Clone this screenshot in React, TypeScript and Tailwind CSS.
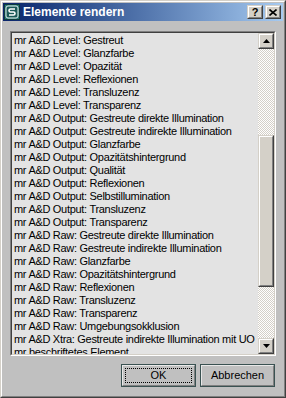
import React from "react";

const items = [
  "mr A&D Level: Gestreut",
  "mr A&D Level: Glanzfarbe",
  "mr A&D Level: Opazität",
  "mr A&D Level: Reflexionen",
  "mr A&D Level: Transluzenz",
  "mr A&D Level: Transparenz",
  "mr A&D Output: Gestreute direkte Illumination",
  "mr A&D Output: Gestreute indirekte Illumination",
  "mr A&D Output: Glanzfarbe",
  "mr A&D Output: Opazitätshintergrund",
  "mr A&D Output: Qualität",
  "mr A&D Output: Reflexionen",
  "mr A&D Output: Selbstillumination",
  "mr A&D Output: Transluzenz",
  "mr A&D Output: Transparenz",
  "mr A&D Raw: Gestreute direkte Illumination",
  "mr A&D Raw: Gestreute indirekte Illumination",
  "mr A&D Raw: Glanzfarbe",
  "mr A&D Raw: Opazitätshintergrund",
  "mr A&D Raw: Reflexionen",
  "mr A&D Raw: Transluzenz",
  "mr A&D Raw: Transparenz",
  "mr A&D Raw: Umgebungsokklusion",
  "mr A&D Xtra: Gestreute indirekte Illumination mit UO",
  "mr beschriftetes Element",
];

function Bevel({ className = "", children }: { className?: string; children?: React.ReactNode }) {
  return (
    <div className={`border border-t-[#d4d0c8] border-l-[#d4d0c8] border-r-[#404040] border-b-[#404040] ${className}`}>
      <div className="flex h-full w-full items-center justify-center border border-t-white border-l-white border-r-[#808080] border-b-[#808080] bg-[#d4d0c8]">
        {children}
      </div>
    </div>
  );
}

function Arrow({ up }: { up: boolean }) {
  return (
    <svg width="7" height="4" viewBox="0 0 7 4">
      {up ? <path d="M3.5 0 L7 4 L0 4 Z" fill="#000" /> : <path d="M0 0 L7 0 L3.5 4 Z" fill="#000" />}
    </svg>
  );
}

function MaxIcon() {
  return (
    <svg width="16" height="16" viewBox="0 0 16 16">
      <rect x="0" y="0" width="16" height="16" fill="#0d3b3b" />
      <rect x="1" y="1" width="14" height="14" fill="#2a7a78" />
      <rect x="2" y="2" width="12" height="12" rx="2" fill="#1b5a58" stroke="#e8f4f0" strokeWidth="1" />
      <path d="M11 5 H6.5 Q5 5 5 6.5 Q5 8 6.5 8 H9.5 Q11 8 11 9.5 Q11 11 9.5 11 H5" fill="none" stroke="#ffffff" strokeWidth="1.6" />
    </svg>
  );
}

export default function App() {
  return (
    <div className="h-[398px] w-[286px] overflow-hidden border border-t-[#d4d0c8] border-l-[#d4d0c8] border-r-[#404040] border-b-[#404040] bg-[#c0c0c0] font-['Liberation_Sans',Arial,sans-serif]">
      <div className="flex h-full w-full flex-col border border-t-white border-l-white border-r-[#808080] border-b-[#808080] p-px">
        {/* Title bar */}
        <div className="flex h-[18px] shrink-0 items-center bg-gradient-to-r from-[#0a246a] to-[#a6caf0] pl-[1px] pr-[2px]">
          <MaxIcon />
          <span className="ml-[3px] text-[12px] font-bold leading-none text-white">Elemente rendern</span>
          <div className="ml-auto flex gap-[2px]">
            <Bevel className="h-[14px] w-[16px]">
              <span className="text-[11px] font-bold leading-none text-black">?</span>
            </Bevel>
            <Bevel className="h-[14px] w-[16px]">
              <svg width="8" height="7" viewBox="0 0 8 7">
                <path d="M0.5 0.5 L7.5 6.5 M7.5 0.5 L0.5 6.5" stroke="#000" strokeWidth="1.6" />
              </svg>
            </Bevel>
          </div>
        </div>

        {/* Body */}
        <div className="flex flex-1 flex-col px-[7px] pt-[10px] pb-[8px]">
          <div className="h-[325px] border border-t-[#808080] border-l-[#808080] border-r-white border-b-white">
            <div className="flex h-full border border-t-[#404040] border-l-[#404040] border-r-[#d4d0c8] border-b-[#d4d0c8] bg-[#e3e3e3]">
              <div className="flex-1 overflow-hidden pl-[2px] pt-px text-[11px] leading-[13px] tracking-[-0.3px] text-black">
                {items.map((t) => (
                  <div key={t} className="h-[13px] whitespace-nowrap">
                    {t}
                  </div>
                ))}
              </div>
              <div className="flex w-[16px] flex-col bg-[repeating-conic-gradient(#d4d0c8_0%_25%,#ffffff_0%_50%)] bg-[length:2px_2px]">
                <Bevel className="h-[16px] w-[16px] shrink-0">
                  <Arrow up />
                </Bevel>
                <div className="h-[86px] shrink-0" />
                <Bevel className="h-[152px] w-[16px] shrink-0" />
                <div className="flex-1" />
                <Bevel className="h-[16px] w-[16px] shrink-0">
                  <Arrow up={false} />
                </Bevel>
              </div>
            </div>
          </div>

          <div className="mt-[8px] flex justify-end gap-[4px] pr-px">
            <button className="h-[23px] w-[75px] border border-[#3a5252] bg-[#c0c0c0] p-0">
              <div className="flex h-full w-full items-center justify-center border border-t-[#e8e8e8] border-l-[#e8e8e8] border-r-[#808080] border-b-[#808080] p-[2px]">
                <div className="flex h-full w-full items-center justify-center border border-dotted border-black text-[11px] text-black">
                  OK
                </div>
              </div>
            </button>
            <button className="h-[23px] w-[75px] border border-[#3a5252] bg-[#c0c0c0] p-0">
              <div className="flex h-full w-full items-center justify-center border border-t-[#e8e8e8] border-l-[#e8e8e8] border-r-[#808080] border-b-[#808080] text-[11px] text-black">
                Abbrechen
              </div>
            </button>
          </div>
        </div>
      </div>
    </div>
  );
}
